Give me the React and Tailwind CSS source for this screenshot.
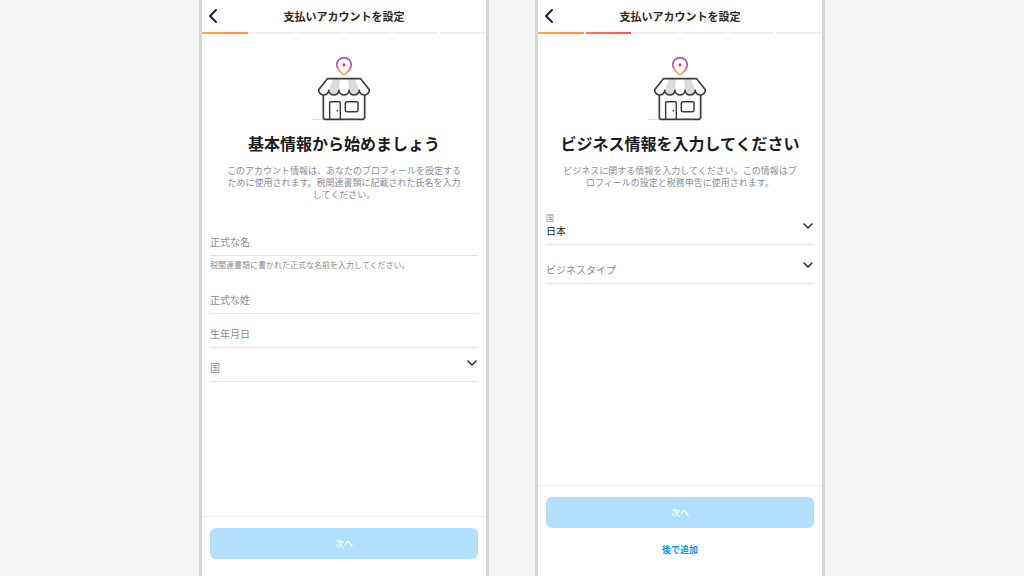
import React, { useState } from "react";

const TOTAL_STEPS = 6;
const STEP_COLORS = [
  "bg-linear-to-r from-[#fbab4a] to-[#fb8f4e]",
  "bg-linear-to-r from-[#fb7c4c] to-[#f4555a]",
];

function ShopIllustration({ id }) {
  const awning =
    "M82 86H182L208 119a15.2 15 0 0 1-30.4 2a15.2 14 0 0 1-30.4 0a15.2 14 0 0 1-30.4 0a15.2 14 0 0 1-30.4 0a15.2 15 0 0 1-30.4-2Z";

  return (
    <svg
      viewBox="36 18 192 198"
      className="mx-auto h-[66px] w-16"
      fill="none"
      strokeLinecap="round"
      strokeLinejoin="round"
      aria-hidden="true"
    >
      <defs>
        <linearGradient id={id} x1="0.4" y1="0" x2="0.25" y2="1">
          <stop offset="0" stopColor="#6a4fd8" />
          <stop offset="0.3" stopColor="#c038a8" />
          <stop offset="0.55" stopColor="#ee3f7c" />
          <stop offset="0.75" stopColor="#fb8a4c" />
          <stop offset="1" stopColor="#fdbb55" />
        </linearGradient>
      </defs>

      {/* map pin */}
      <path
        d="M132 76C124 67 110 58 110 44a22 21 0 0 1 44 0C154 58 140 67 132 76Z"
        stroke={`url(#${id})`}
        strokeWidth="4.5"
      />
      <circle cx="132" cy="44" r="4.5" fill="#e0307a" />

      {/* ground shadow */}
      <path d="M39 208H70" stroke="#dcdcdc" strokeWidth="4" />

      {/* walls */}
      <path d="M70 135V202q0 6 6 6H188q6 0 6-6V135" stroke="#3c3c3f" strokeWidth="5" />

      {/* awning */}
      <path d={awning} fill="#fff" />
      <path d="M99 88H120L116.8 121a15.2 14 0 0 1-30.4 0Z" fill="#dcdcdc" />
      <path d="M144 88H165L177.6 121a15.2 14 0 0 1-30.4 0Z" fill="#dcdcdc" />
      <path d={awning} stroke="#3c3c3f" strokeWidth="5" />

      {/* door and window */}
      <path d="M89 208V159q0-4 4-4H117q4 0 4 4V208" stroke="#3c3c3f" strokeWidth="4.5" />
      <circle cx="112" cy="182" r="2.5" fill="#3c3c3f" />
      <rect x="136" y="155" width="38" height="30" rx="4" stroke="#3c3c3f" strokeWidth="4.5" />
    </svg>
  );
}

function StepBar({ step }) {
  return (
    <div className="flex gap-0.5" aria-hidden="true">
      {Array.from({ length: TOTAL_STEPS }, (_, i) => (
        <div
          key={i}
          className={`h-0.5 flex-1 ${i < step ? STEP_COLORS[i] : "bg-[#eff0f4]"}`}
        />
      ))}
    </div>
  );
}

function TextField({ id, label, hint }) {
  const [value, setValue] = useState("");

  return (
    <div>
      <div className="relative flex h-[34px] items-end border-b border-[#e6e6e8] pb-[3px]">
        <input
          id={id}
          type="text"
          value={value}
          onChange={(e) => setValue(e.target.value)}
          aria-describedby={hint ? `${id}-hint` : undefined}
          className="h-5 w-full bg-transparent text-[10px] text-[#262626] outline-none"
        />
        <label
          htmlFor={id}
          className={`pointer-events-none absolute left-0 text-[#8a8d94] ${
            value ? "top-0 text-[8px] leading-3" : "bottom-[3px] text-[10px] leading-5"
          }`}
        >
          {label}
        </label>
      </div>
      {hint && (
        <p id={`${id}-hint`} className="pt-[3px] pb-[9px] text-[8px] leading-3 text-[#8a8d94]">
          {hint}
        </p>
      )}
    </div>
  );
}

function SelectField({ id, label, options, initial = "", tall = false }) {
  const [value, setValue] = useState(initial);

  return (
    <div
      className={`relative flex items-end border-b border-[#e6e6e8] pb-[3px] ${
        tall ? "h-[39px]" : "h-[34px]"
      }`}
    >
      <select
        id={id}
        value={value}
        onChange={(e) => setValue(e.target.value)}
        className="h-5 w-full appearance-none bg-transparent text-[10px] leading-5 text-[#262626] outline-none"
      >
        <option value="" hidden></option>
        {options.map((o) => (
          <option key={o} value={o}>
            {o}
          </option>
        ))}
      </select>
      <label
        htmlFor={id}
        className={`pointer-events-none absolute left-0 text-[#8a8d94] ${
          value ? "bottom-5 text-[8px] leading-3" : "bottom-[3px] text-[10px] leading-5"
        }`}
      >
        {label}
      </label>
      <svg
        viewBox="0 0 10 6"
        className="pointer-events-none absolute right-px bottom-[15px] h-1.5 w-2.5"
        fill="none"
        stroke="#262626"
        strokeWidth="1.5"
        strokeLinecap="round"
        strokeLinejoin="round"
        aria-hidden="true"
      >
        <path d="M1 1L5 5L9 1" />
      </svg>
    </div>
  );
}

function Screen({ step, heading, description, footerLink, children }) {
  return (
    <section className="flex w-[290px] flex-col border-x-[3px] border-[#dad8d7] bg-white">
      <header className="grid h-8 grid-cols-[1fr_auto_1fr] items-center px-[7px]">
        <button type="button" aria-label="戻る" className="justify-self-start">
          <svg
            viewBox="0 0 8 14"
            className="h-3.5 w-2"
            fill="none"
            stroke="#1c1c1e"
            strokeWidth="1.9"
            strokeLinecap="round"
            strokeLinejoin="round"
          >
            <path d="M7 1L1 7L7 13" />
          </svg>
        </button>
        <h1 className="text-[11px] leading-4 font-bold text-[#262626]">支払いアカウントを設定</h1>
      </header>
      <StepBar step={step} />

      <div className="flex-1 px-2 pt-[22px]">
        <ShopIllustration id={`pin-${step}`} />
        <h2 className="mt-[9px] text-center text-base leading-6 font-bold text-[#1c1c1e]">
          {heading}
        </h2>
        <p className="mt-2.5 px-3.5 text-center text-[9px] leading-3 text-[#8a8d94]">
          {description}
        </p>
        {children}
      </div>

      <footer className="border-t border-[#ebedee] px-2 pt-[11px] pb-[17px]">
        <button
          type="button"
          disabled
          className="block h-[31px] w-full rounded-md bg-[#b2dffc] text-[9px] font-medium text-white"
        >
          次へ
        </button>
        {footerLink && (
          <a
            href="#"
            className="mx-auto mt-3 block w-fit text-[9px] leading-[19px] font-bold text-[#0095f6]"
          >
            {footerLink}
          </a>
        )}
      </footer>
    </section>
  );
}

export default function App() {
  return (
    <main
      lang="ja"
      className="flex min-h-screen justify-center gap-[46px] bg-[#f5f5f5] font-['Noto_Sans_CJK_JP',sans-serif]"
    >
      <Screen
        step={1}
        heading="基本情報から始めましょう"
        description="このアカウント情報は、あなたのプロフィールを設定するために使用されます。税関連書類に記載された氏名を入力してください。"
      >
        <form className="mt-[21px]">
          <TextField
            id="first-name"
            label="正式な名"
            hint="税関連書類に書かれた正式な名前を入力してください。"
          />
          <TextField id="last-name" label="正式な姓" />
          <TextField id="birthday" label="生年月日" />
          <SelectField id="country" label="国" options={["日本"]} />
        </form>
      </Screen>

      <Screen
        step={2}
        heading="ビジネス情報を入力してください"
        description="ビジネスに関する情報を入力してください。この情報はプロフィールの設定と税務申告に使用されます。"
        footerLink="後で追加"
      >
        <form className="mt-[17px]">
          <SelectField id="business-country" label="国" options={["日本"]} initial="日本" tall />
          <SelectField id="business-type" label="ビジネスタイプ" options={["個人", "法人"]} tall />
        </form>
      </Screen>
    </main>
  );
}
